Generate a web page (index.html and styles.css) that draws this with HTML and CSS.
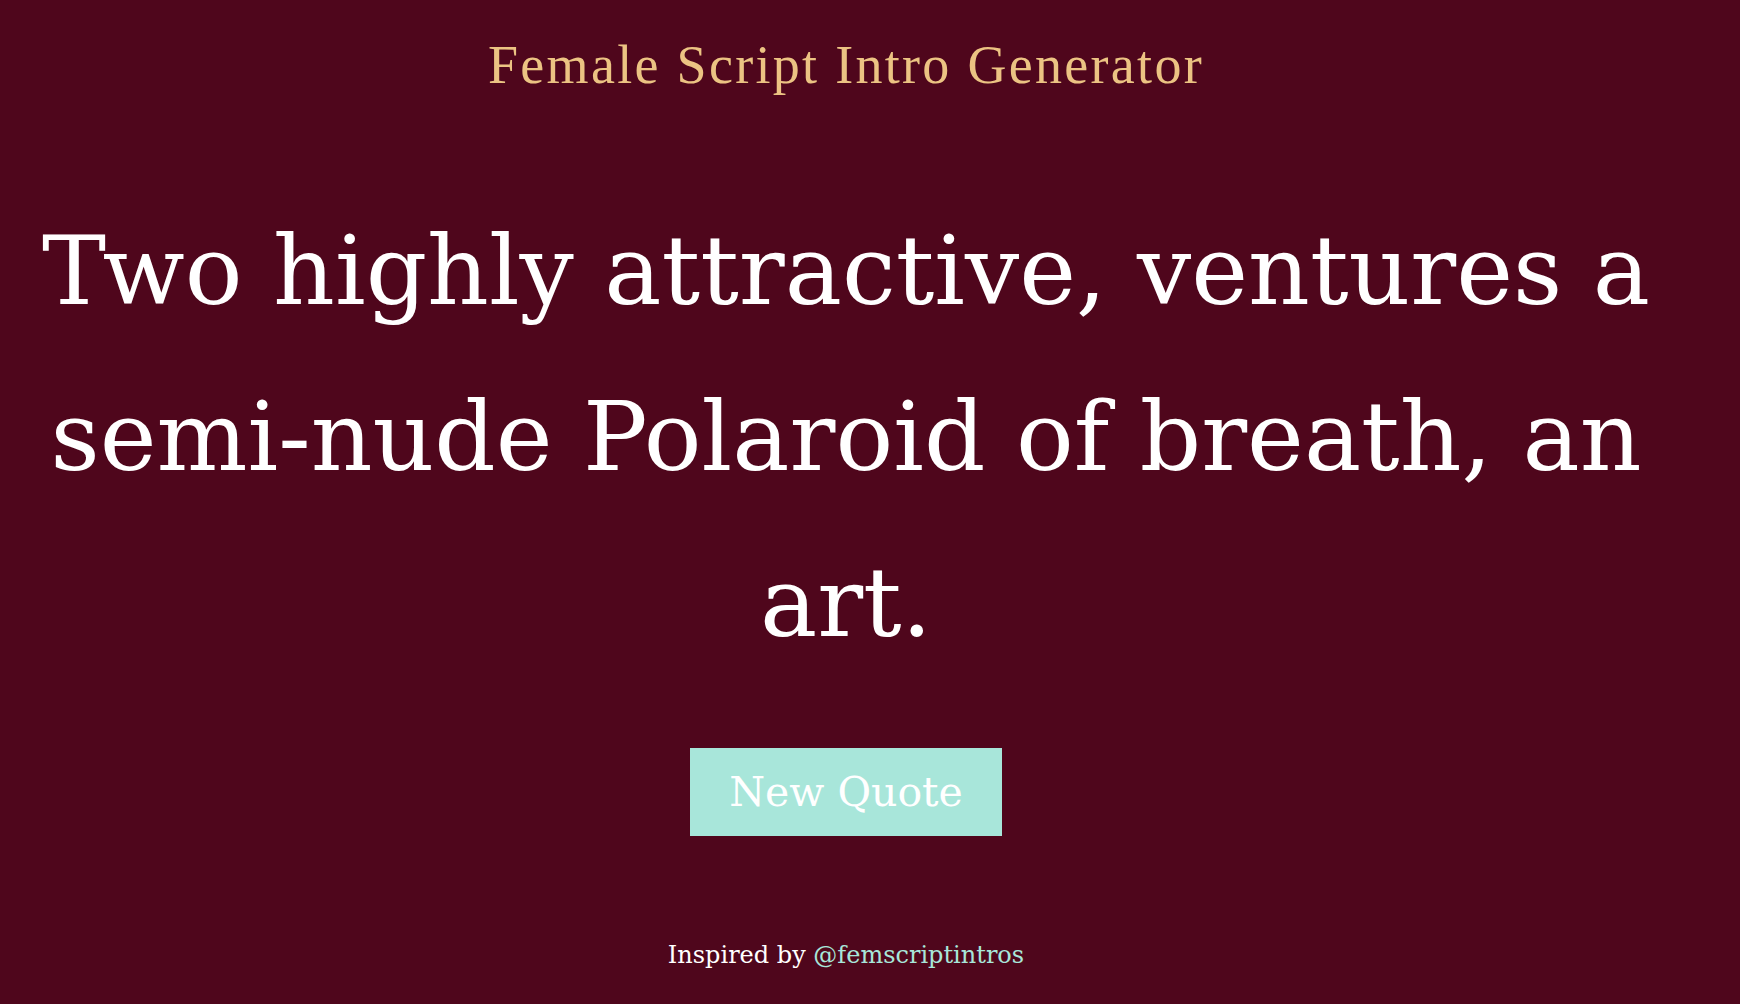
FILE: index.html
```html
<!DOCTYPE html>
<html>
<head>
<meta charset="utf-8">
<title>Female Script Intro Generator</title>
<link rel="stylesheet" href="styles.css">
</head>
<body>
<div class="page">
  <h1 class="title">Female Script Intro Generator</h1>
  <p class="quote">Two highly attractive, ventures a semi-nude Polaroid of breath, an art.</p>
  <button class="btn">New Quote</button>
  <p class="credit">Inspired by <a href="#" class="link">@femscriptintros</a></p>
</div>
</body>
</html>
```
FILE: styles.css
```css
html, body {
  margin: 0;
  padding: 0;
  background: #4f061c;
}
.page {
  display: flex;
  flex-direction: column;
  align-items: center;
  width: 1692px;
  min-height: 1004px;
  font-family: "DejaVu Serif", serif;
}
.title {
  margin: 35px 0 0;
  font-family: "Liberation Serif", serif;
  font-weight: normal;
  font-size: 54px;
  letter-spacing: 2.3px;
  line-height: 60px;
  color: #ecc383;
}
.quote {
  margin: 93px 40px 0;
  text-align: center;
  color: #ffffff;
  font-size: 96px;
  line-height: 166px;
}
.btn {
  margin-top: 62px;
  width: 312px;
  height: 88px;
  border: none;
  background: #a8e6da;
  color: #ffffff;
  font-family: "DejaVu Serif", serif;
  font-weight: normal;
  font-size: 41px;
  padding: 0;
}
.credit {
  margin: 105px 0 0;
  color: #ffffff;
  font-size: 24px;
}
.link {
  color: #a8e6da;
  text-decoration: none;
}
```
